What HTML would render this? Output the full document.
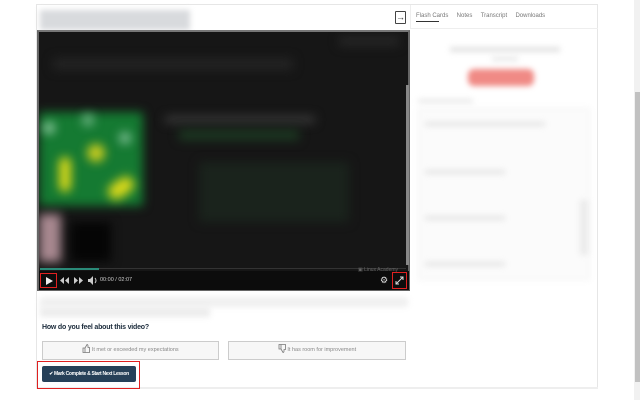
<!DOCTYPE html>
<html><head><meta charset="utf-8"><style>
*{box-sizing:border-box;margin:0;padding:0}
body{width:640px;height:400px;background:#fff;font-family:"Liberation Sans",sans-serif;position:relative;overflow:hidden}
.a{position:absolute}
.blur{filter:blur(3px)}
.b5{filter:blur(5px)}
</style></head><body>
<div class="a" style="left:36px;top:4px;width:562px;height:384px;border:1px solid #e6e6e6"></div>
<div class="a" style="left:36px;top:387px;width:562px;height:2px;background:#eee"></div>
<div class="a blur" style="left:40px;top:10px;width:150px;height:20px;background:#d8dadd"></div>
<div class="a" style="left:395px;top:11px;width:11px;height:13px;border:1px solid #444;border-radius:1px;font-size:9px;line-height:11px;text-align:center;color:#333">&#8594;</div>
<div class="a" style="left:410px;top:5px;width:188px;height:24px;border-left:1px solid #eee;border-bottom:1px solid #eee"></div>
<div class="a" style="left:416px;top:13px;font-size:6px;color:#777;white-space:nowrap">Flash Cards&nbsp;&nbsp;&nbsp;&nbsp;&nbsp;Notes&nbsp;&nbsp;&nbsp;&nbsp;&nbsp;Transcript&nbsp;&nbsp;&nbsp;&nbsp;&nbsp;Downloads</div>
<div class="a" style="left:416px;top:21px;width:23px;height:1px;background:#333"></div>
<div class="a blur" style="left:450px;top:47px;width:110px;height:5px;background:#e2e2e2"></div>
<div class="a blur" style="left:492px;top:57px;width:26px;height:4px;background:#e6e6e6"></div>
<div class="a blur" style="left:468px;top:69px;width:66px;height:17px;background:#f08a85;border-radius:6px"></div>
<div class="a blur" style="left:418px;top:99px;width:55px;height:4px;background:#e8e8e8"></div>
<div class="a blur" style="left:418px;top:108px;width:172px;height:172px;background:#fbfbfb;border:1px solid #eee"></div>
<div class="a blur" style="left:425px;top:122px;width:120px;height:4px;background:#e4e4e4"></div>
<div class="a blur" style="left:425px;top:170px;width:80px;height:4px;background:#e4e4e4"></div>
<div class="a blur" style="left:425px;top:216px;width:80px;height:4px;background:#e4e4e4"></div>
<div class="a blur" style="left:425px;top:262px;width:80px;height:4px;background:#e4e4e4"></div>
<div class="a blur" style="left:580px;top:200px;width:8px;height:55px;background:#eaeaea"></div>
<!-- video -->
<div class="a" style="left:37px;top:30px;width:373px;height:261px;background:#161616;border:2px solid #666;border-top-color:#777;overflow:hidden">
  <div class="a b5" style="left:14px;top:26px;width:240px;height:12px;background:#232323"></div>
  <div class="a b5" style="left:300px;top:4px;width:60px;height:10px;background:#262626"></div>
  <div class="a b5" style="left:0px;top:80px;width:104px;height:94px;background:#157a32"></div>
  <div class="a b5" style="left:4px;top:90px;width:12px;height:12px;background:#8fc9a0;border-radius:50%"></div>
  <div class="a b5" style="left:43px;top:82px;width:12px;height:12px;background:#6fb585;border-radius:50%"></div>
  <div class="a b5" style="left:80px;top:100px;width:12px;height:12px;background:#7fbf95;border-radius:50%"></div>
  <div class="a b5" style="left:20px;top:125px;width:12px;height:35px;background:#d8d81a;border-radius:6px"></div>
  <div class="a b5" style="left:48px;top:112px;width:18px;height:18px;background:#c8cc20;border-radius:50%"></div>
  <div class="a b5" style="left:68px;top:148px;width:28px;height:16px;background:#d8d81a;border-radius:8px;transform:rotate(-35deg)"></div>
  <div class="a b5" style="left:126px;top:84px;width:150px;height:7px;background:#3a3a3a"></div>
  <div class="a b5" style="left:140px;top:98px;width:120px;height:10px;background:#1c3a22"></div>
  <div class="a b5" style="left:160px;top:130px;width:150px;height:60px;background:#1a231c"></div>
  <div class="a b5" style="left:0px;top:182px;width:22px;height:48px;background:#a88890"></div>
  <div class="a b5" style="left:32px;top:190px;width:40px;height:40px;background:#050505"></div>
</div>
<div class="a" style="left:406px;top:85px;width:3px;height:180px;background:#888"></div>
<div class="a" style="left:40px;top:268px;width:366px;height:1px;background:#333"></div>
<div class="a" style="left:40px;top:268px;width:59px;height:2px;background:#2a8a78"></div>
<div class="a" style="left:39px;top:271px;width:370px;height:19px;background:#0c0c0c"></div>
<div class="a" style="left:40px;top:273px;width:17px;height:15px;border:1.5px solid #e02020"></div>
<svg class="a" style="left:44px;top:276px" width="10" height="10"><path d="M2 1L9 5L2 9Z" fill="#eee"/></svg>
<svg class="a" style="left:60px;top:277px" width="9" height="7"><path d="M4 0L0 3.5L4 7ZM9 0L5 3.5L9 7Z" fill="#ccc"/></svg>
<svg class="a" style="left:74px;top:277px" width="9" height="7"><path d="M0 0L4 3.5L0 7ZM5 0L9 3.5L5 7Z" fill="#ccc"/></svg>
<svg class="a" style="left:88px;top:276px" width="10" height="9"><path d="M0 3H2L5 0V9L2 6H0Z" fill="#ccc"/><path d="M7 2Q9 4.5 7 7" stroke="#ccc" fill="none"/></svg>
<div class="a" style="left:100px;top:277px;font-size:5.5px;color:#ccc">00:00 / 02:07</div>
<div class="a" style="left:358px;top:267px;font-size:5px;color:#666">&#9635; Linux Academy</div>
<div class="a" style="left:380px;top:275px;font-size:9px;color:#ddd">&#9881;</div>
<div class="a" style="left:392px;top:272px;width:15px;height:17px;border:1.5px solid #e02020"></div>
<svg class="a" style="left:395px;top:276px" width="9" height="9"><path d="M1 8L8 1M5 1H8V4M1 5V8H4" stroke="#ddd" stroke-width="1" fill="none"/></svg>
<div class="a blur" style="left:40px;top:297px;width:368px;height:10px;background:#f0f0f0"></div>
<div class="a blur" style="left:40px;top:307px;width:170px;height:10px;background:#ececec"></div>
<div class="a" style="left:42px;top:324px;font-size:7px;color:#1a2a3a;font-weight:bold;letter-spacing:-0.2px">How do you feel about this video?</div>
<div class="a" style="left:42px;top:341px;width:177px;height:19px;border:1px solid #ccc;background:#f7f7f7;font-size:5.5px;color:#888;text-align:center;line-height:17px"><svg width="8" height="9" style="vertical-align:-2px"><path d="M1 4H3V8.5H1ZM3 4L5 0.5Q6 0.5 6 2V3.5H7.5V8.5H3" stroke="#777" stroke-width="0.8" fill="none"/></svg> It met or exceeded my expectations</div>
<div class="a" style="left:228px;top:341px;width:178px;height:19px;border:1px solid #ccc;background:#f7f7f7;font-size:5.5px;color:#888;text-align:center;line-height:17px"><svg width="8" height="9" style="vertical-align:-2px"><path d="M1 5H3V0.5H1ZM3 5L5 8.5Q6 8.5 6 7V5.5H7.5V0.5H3" stroke="#777" stroke-width="0.8" fill="none"/></svg> It has room for improvement</div>
<div class="a" style="left:37px;top:361px;width:103px;height:28px;border:1.5px solid #e02020"></div>
<div class="a" style="left:42px;top:366px;width:94px;height:16px;background:#264058;border-radius:2px;color:#fff;font-size:5px;font-weight:bold;line-height:16px;text-align:center;white-space:nowrap;letter-spacing:-0.3px">&#10004; Mark Complete &amp; Start Next Lesson</div>
<div class="a" style="left:634px;top:0;width:6px;height:400px;background:#f1f1f1"></div>
<div class="a" style="left:635px;top:92px;width:5px;height:290px;background:#c1c1c1"></div>
</body></html>
